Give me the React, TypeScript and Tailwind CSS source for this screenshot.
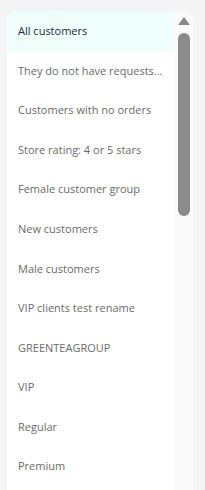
import React from 'react';

const groups = [
  'All customers',
  'They do not have requests...',
  'Customers with no orders',
  'Store rating: 4 or 5 stars',
  'Female customer group',
  'New customers',
  'Male customers',
  'VIP clients test rename',
  'GREENTEAGROUP',
  'VIP',
  'Regular',
  'Premium',
];

const App: React.FC = () => {
  return (
    <div className="h-[490px] w-[205px] overflow-hidden bg-[#f5f5f5] pl-[7px] pr-[12px] pt-[11px]" style={{ fontFamily: '"Open Sans", "Noto Sans", sans-serif' }}>
      <div className="flex h-full overflow-hidden rounded-t-[9px] bg-white">
        <ul className="flex w-[167px] flex-col">
          {groups.map((g, i) => (
            <li
              key={g}
              className={
                i === 0
                  ? 'flex h-[40px] shrink-0 items-center bg-[#effefb] pl-[11px] pr-[4px] text-[11px] text-[#1d2b3a]'
                  : 'flex h-[39.6px] shrink-0 items-center pl-[11px] pr-[4px] text-[11px] text-[#6b6b6b]'
              }
            >
              <span className="truncate">{g}</span>
            </li>
          ))}
        </ul>
        <div className="flex w-[19px] flex-col items-center rounded-tr-[9px] bg-[#fafafa] pt-[6px]">
          <svg width="12" height="8" viewBox="0 0 12 8">
            <polygon points="6,0 12,8 0,8" fill="#888888" />
          </svg>
          <div className="mt-[8px] h-[183px] w-[12px] rounded-full bg-[#8a8a8a]" />
        </div>
      </div>
    </div>
  );
};

export default App;
